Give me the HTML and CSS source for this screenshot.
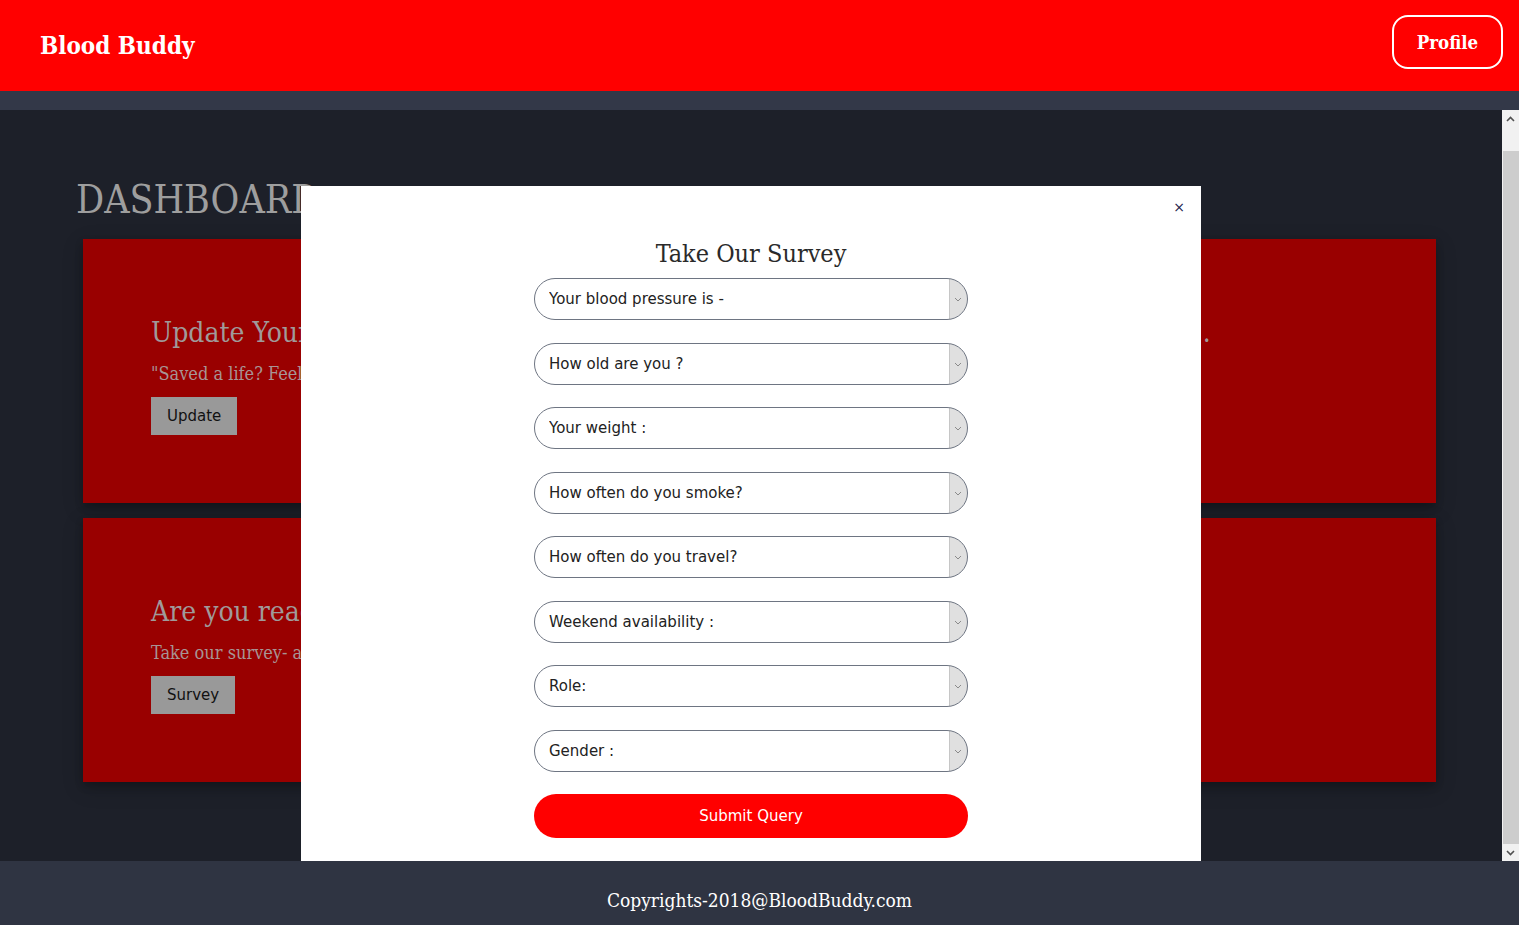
FILE: index.html
```html
<!DOCTYPE html>
<html lang="en">
<head>
<meta charset="utf-8">
<title>Blood Buddy - Dashboard</title>
<link rel="stylesheet" href="styles.css">
</head>
<body>
<header class="topbar">
  <div class="brand">Blood Buddy</div>
  <a class="profile-btn" href="#">Profile</a>
</header>
<div class="strip"></div>
<div class="stage">
  <main class="scroller" id="scroller">
    <div class="content">
      <h1 class="dash-title">DASHBOARD</h1>
      <section class="card">
        <h2 class="card-title">Update Your Profile and let everyone know when you last donated blood, recently .</h2>
        <p class="card-text">"Saved a life? Feel proud and update your donation details here."</p>
        <button class="card-btn" type="button">Update</button>
      </section>
      <section class="card">
        <h2 class="card-title">Are you ready to save a life?</h2>
        <p class="card-text">Take our survey- and find out.</p>
        <button class="card-btn" type="button">Survey</button>
      </section>
    </div>
  </main>
  <div class="vscroll" aria-hidden="true">
    <div class="vs-btn"><svg width="9" height="6" viewBox="0 0 9 6"><path d="M1 5l3.5-3.5L8 5" fill="none" stroke="#505050" stroke-width="1.6"/></svg></div>
    <div class="vs-gap"></div>
    <div class="vs-thumb"></div>
    <div class="vs-rest"></div>
    <div class="vs-btn"><svg width="9" height="6" viewBox="0 0 9 6"><path d="M1 1l3.5 3.5L8 1" fill="none" stroke="#505050" stroke-width="1.6"/></svg></div>
  </div>
  <div class="modal">
    <span class="close">&times;</span>
    <h3 class="modal-title">Take Our Survey</h3>
    <form class="survey">
      <div class="field"><select><option>Your blood pressure is -</option></select><svg class="chev" width="8" height="5" viewBox="0 0 8 5"><path d="M1 1l3 3 3-3" fill="none" stroke="#8a8a8a" stroke-width="1"/></svg></div>
      <div class="field"><select><option>How old are you ?</option></select><svg class="chev" width="8" height="5" viewBox="0 0 8 5"><path d="M1 1l3 3 3-3" fill="none" stroke="#8a8a8a" stroke-width="1"/></svg></div>
      <div class="field"><select><option>Your weight :</option></select><svg class="chev" width="8" height="5" viewBox="0 0 8 5"><path d="M1 1l3 3 3-3" fill="none" stroke="#8a8a8a" stroke-width="1"/></svg></div>
      <div class="field"><select><option>How often do you smoke?</option></select><svg class="chev" width="8" height="5" viewBox="0 0 8 5"><path d="M1 1l3 3 3-3" fill="none" stroke="#8a8a8a" stroke-width="1"/></svg></div>
      <div class="field"><select><option>How often do you travel?</option></select><svg class="chev" width="8" height="5" viewBox="0 0 8 5"><path d="M1 1l3 3 3-3" fill="none" stroke="#8a8a8a" stroke-width="1"/></svg></div>
      <div class="field"><select><option>Weekend availability :</option></select><svg class="chev" width="8" height="5" viewBox="0 0 8 5"><path d="M1 1l3 3 3-3" fill="none" stroke="#8a8a8a" stroke-width="1"/></svg></div>
      <div class="field"><select><option>Role:</option></select><svg class="chev" width="8" height="5" viewBox="0 0 8 5"><path d="M1 1l3 3 3-3" fill="none" stroke="#8a8a8a" stroke-width="1"/></svg></div>
      <div class="field"><select><option>Gender :</option></select><svg class="chev" width="8" height="5" viewBox="0 0 8 5"><path d="M1 1l3 3 3-3" fill="none" stroke="#8a8a8a" stroke-width="1"/></svg></div>
      <button class="submit" type="button">Submit Query</button>
    </form>
  </div>
</div>
<footer class="footer">Copyrights-2018@BloodBuddy.com</footer>
<script src="script.js"></script>
</body>
</html>
```

FILE: styles.css
```css
* { box-sizing: border-box; }
html, body { margin: 0; padding: 0; }
body {
  width: 1519px;
  height: 925px;
  overflow: hidden;
  display: flex;
  flex-direction: column;
  font-family: "DejaVu Serif", "Liberation Serif", serif;
  font-stretch: condensed;
  background: #1d2029;
}

.topbar {
  height: 91px;
  flex: none;
  background: #ff0000;
  display: flex;
  align-items: center;
  justify-content: space-between;
  padding: 0 16px 0 40px;
}
.brand {
  color: #fff;
  font-weight: bold;
  font-size: 24px;
  line-height: 30px;
  margin-top: 1px;
}
.profile-btn {
  display: flex;
  align-items: center;
  justify-content: center;
  width: 111px;
  height: 54px;
  margin-top: -7px;
  border: 2px solid #fff;
  border-radius: 16px;
  color: #fff;
  font-weight: bold;
  font-size: 18.5px;
  text-decoration: none;
}

.strip {
  height: 19px;
  flex: none;
  background: #333848;
}

.stage {
  height: 751px;
  flex: none;
  position: relative;
  overflow: hidden;
  display: flex;
}
.scroller {
  flex: 1;
  height: 100%;
  overflow-y: auto;
  background: #1d2029;
  scrollbar-width: none;
}
.scroller::-webkit-scrollbar { display: none; }

.vscroll {
  width: 17px;
  flex: none;
  background: #f1f1f1;
  display: flex;
  flex-direction: column;
}
.vs-btn {
  height: 17px;
  flex: none;
  display: flex;
  align-items: center;
  justify-content: center;
}
.vs-gap { height: 24px; flex: none; }
.vs-thumb {
  height: 693px;
  flex: none;
  margin-left: 1px;
  background: #cdcdcd;
}
.vs-rest { flex: 1; }

.content {
  padding: 93px 66px 79px 76px;
}
.dash-title {
  margin: 0 0 16px 0;
  font-size: 39px;
  line-height: 46px;
  font-weight: normal;
  color: #9e9e9e;
}
.card {
  margin-left: 7px;
  height: 264px;
  background: #990000;
  padding: 77px 0 0 68px;
  box-shadow: 0 4px 8px rgba(0,0,0,0.2), 0 6px 20px rgba(0,0,0,0.19);
  overflow: hidden;
}
.card + .card { margin-top: 15px; }
.card-title {
  margin: 0;
  font-size: 28px;
  line-height: 34px;
  font-weight: normal;
  color: #a09a9a;
  white-space: nowrap;
}
.card-text {
  margin: 12px 0 0 0;
  font-size: 18px;
  line-height: 24px;
  color: #a89494;
  white-space: nowrap;
}
.card-btn {
  margin-top: 11px;
  height: 38px;
  padding: 0 16px;
  border: none;
  background: #999999;
  color: #111;
  font-family: "DejaVu Sans", Verdana, sans-serif;
  font-stretch: normal;
  font-size: 15px;
}

.modal {
  position: absolute;
  top: 76px;
  left: 301px;
  width: 900px;
  bottom: -40px;
  background: #fff;
  padding-top: 53px;
}
.close {
  position: absolute;
  top: 11px;
  right: 16px;
  font-family: "DejaVu Sans", sans-serif;
  font-stretch: normal;
  font-size: 14px;
  line-height: 20px;
  color: #1e1e4e;
}
.modal-title {
  margin: 0 0 10px 0;
  text-align: center;
  font-size: 25px;
  line-height: 29px;
  font-weight: normal;
  color: #2a2a2a;
}
.survey {
  width: 434px;
  margin: 0 auto;
  display: flex;
  flex-direction: column;
  gap: 22.5px;
}
.field {
  position: relative;
  height: 42px;
}
.field select {
  appearance: none;
  -webkit-appearance: none;
  width: 100%;
  height: 42px;
  border: 1px solid #6e7582;
  border-radius: 21px;
  padding: 0 0 0 14px;
  font-family: "DejaVu Sans", Verdana, sans-serif;
  font-stretch: normal;
  font-size: 15px;
  color: #222;
  background: linear-gradient(to right, #fff 0, #fff calc(100% - 18px), #c6c6c6 calc(100% - 18px), #c6c6c6 calc(100% - 17px), #e0e0e0 calc(100% - 17px));
  outline: none;
}
.chev {
  position: absolute;
  right: 6px;
  top: 19px;
  pointer-events: none;
}
.submit {
  height: 44px;
  border: none;
  border-radius: 22px;
  background: #ff0000;
  color: #fff;
  font-family: "DejaVu Sans", Verdana, sans-serif;
  font-stretch: normal;
  font-size: 15px;
}

.footer {
  height: 64px;
  flex: none;
  background: #2f3442;
  color: #fff;
  text-align: center;
  font-size: 19px;
  line-height: 24px;
  padding-top: 27px;
  position: relative;
  z-index: 2;
}
```

FILE: script.js
```js
var scroller = document.getElementById('scroller');
scroller.scrollTop = scroller.scrollHeight;
```
